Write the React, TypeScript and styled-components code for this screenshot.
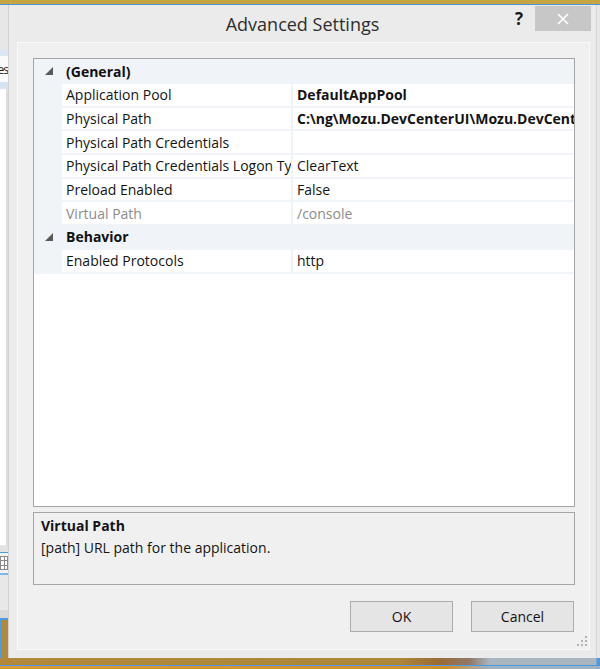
import React from "react";
import styled, { createGlobalStyle } from "styled-components";

const ui = `"Open Sans", "Noto Sans", "DejaVu Sans", sans-serif`;

const GlobalStyle = createGlobalStyle`
  html, body {
    margin: 0;
    padding: 0;
  }
  body {
    width: 600px;
    height: 669px;
    overflow: hidden;
    font-family: ${ui};
    background: #e8e8e8;
  }
  * { box-sizing: border-box; }
`;

const Desktop = styled.div`
  width: 600px;
  height: 669px;
  display: flex;
  flex-direction: column;
  background: #e8e8e8;
`;

const TopEdge = styled.div`
  flex-shrink: 0;
  height: 5px;
  background: #c6a443;
  border-bottom: 1px solid #4a93d6;
`;

const Middle = styled.div`
  display: flex;
  height: 653px;
`;

const BackWindow = styled.div`
  width: 8px;
  display: flex;
  flex-direction: column;
  overflow: hidden;
`;

const BackBand = styled.div<{ $h: number; $bg: string }>`
  flex-shrink: 0;
  height: ${(p) => p.$h}px;
  background: ${(p) => p.$bg};
`;

const BackText = styled.div`
  height: 26px;
  display: flex;
  align-items: center;
  justify-content: flex-end;
  background: #fafafa;
  font-size: 12px;
  color: #222;
  letter-spacing: -1px;
  white-space: nowrap;
`;

const BackList = styled.div`
  flex: 1;
  background: #fff;
  border-right: 2px solid #dcdcdc;
`;

const BackIcon = styled.div`
  height: 20px;
  background: #f2f2f2;
  display: flex;
  align-items: center;
`;

const BackDesk = styled.div`
  height: 38px;
  background: #b08a3a;
  border-left: 2px solid #4a9be0;
`;

const Dialog = styled.div`
  flex: 1;
  margin-right: 3px;
  display: flex;
  flex-direction: column;
  background: #ebebeb;
  border-left: 1px solid #cfcfcf;
  border-right: 1px solid #d6d6d6;
`;

const TitleBar = styled.div`
  height: 37px;
  flex-shrink: 0;
  display: grid;
  grid-template-columns: 1fr auto 1fr;
`;

const Title = styled.div`
  grid-column: 2;
  padding-top: 4px;
  font-size: 18px;
  color: #2e2e2e;
  line-height: 30px;
`;

const TitleButtons = styled.div`
  grid-column: 3;
  justify-self: end;
  display: flex;
  align-items: flex-start;
  gap: 12px;
  padding-right: 5px;
`;

const Help = styled.div`
  margin-top: 3px;
  font-size: 17px;
  font-weight: 700;
  color: #1a1a1a;
  line-height: 22px;
`;

const Close = styled.div`
  margin-top: 1px;
  width: 56px;
  height: 25px;
  background: #c7c7c7;
  display: flex;
  align-items: center;
  justify-content: center;
`;

const Client = styled.div`
  position: relative;
  margin: 0 6px 8px 8px;
  height: 608px;
  display: flex;
  flex-direction: column;
  padding: 15px 14px 17px 15px;
  background: #f0f0f0;
  border: 1px solid #f9f9f9;
`;

const PropGrid = styled.div`
  height: 449px;
  flex-shrink: 0;
  background: #fff;
  border: 1px solid #a5a5a5;
  overflow: hidden;
`;

const RowList = styled.div`
  display: flex;
  flex-direction: column;
  gap: 2px;
  padding: 1px 0 2px;
  background: #f0f3f8;
`;

const CategoryRow = styled.div`
  height: 22px;
  display: grid;
  grid-template-columns: 28px 1fr;
  align-items: center;
  background: #f0f3f8;
  font-size: 14px;
  font-weight: 700;
  color: #111;
`;

const Expander = styled.svg`
  margin-left: 11px;
`;

const CategoryName = styled.div`
  padding-left: 4px;
`;

const PropRow = styled.div`
  height: 21.67px;
  display: grid;
  grid-template-columns: 28px 231px 1fr;
  font-size: 14px;
`;

const Gutter = styled.div`
  background: #f0f3f8;
`;

const Cell = styled.div<{ $bold?: boolean; $muted?: boolean; $divider?: boolean }>`
  display: flex;
  align-items: center;
  padding-left: 4px;
  background: #fff;
  white-space: nowrap;
  overflow: hidden;
  font-weight: ${(p) => (p.$bold ? 700 : 400)};
  color: ${(p) => (p.$muted ? "#8c8c8c" : "#141414")};
  border-right: ${(p) => (p.$divider ? "2px solid #f0f3f8" : "none")};
`;

const Description = styled.div`
  margin-top: 5px;
  height: 73px;
  flex-shrink: 0;
  border: 1px solid #a5a5a5;
  padding: 2px 7px;
  font-size: 14px;
  line-height: 22px;
  color: #141414;
`;

const DescTitle = styled.div`
  font-weight: 700;
`;

const ButtonRow = styled.div`
  margin-top: 16px;
  display: flex;
  justify-content: flex-end;
  gap: 18px;
  padding-right: 1px;
`;

const Button = styled.div`
  width: 103px;
  height: 31px;
  display: flex;
  align-items: center;
  justify-content: center;
  background: #e5e5e5;
  border: 1px solid #acacac;
  font-size: 14px;
  color: #141414;
`;

const Grip = styled.svg`
  position: absolute;
  right: 2px;
  bottom: 3px;
`;

const BottomEdge = styled.div`
  height: 11px;
  flex-shrink: 0;
  display: flex;
  flex-direction: column;
`;

const BottomDesk = styled.div`
  height: 7px;
  background: linear-gradient(
    to right,
    #b2893a 0px,
    #ad8638 400px,
    #9b6a35 440px,
    #8f7a6a 470px,
    #a9b6c1 490px,
    #a9b6c1 596px,
    #4a9be0 597px
  );
`;

const BottomLine = styled.div`
  height: 1px;
  background: #4a9be0;
`;

const BottomTask = styled.div`
  height: 3px;
  background: linear-gradient(to right, #d79a35, #cf8f30 450px, #9fb2c4 490px);
`;

type Item =
  | { kind: "cat"; name: string }
  | { kind: "prop"; name: string; value: string; bold?: boolean; muted?: boolean };

const items: Item[] = [
  { kind: "cat", name: "(General)" },
  { kind: "prop", name: "Application Pool", value: "DefaultAppPool", bold: true },
  { kind: "prop", name: "Physical Path", value: "C:\\ng\\Mozu.DevCenterUI\\Mozu.DevCenterUI", bold: true },
  { kind: "prop", name: "Physical Path Credentials", value: "" },
  { kind: "prop", name: "Physical Path Credentials Logon Type", value: "ClearText" },
  { kind: "prop", name: "Preload Enabled", value: "False" },
  { kind: "prop", name: "Virtual Path", value: "/console", muted: true },
  { kind: "cat", name: "Behavior" },
  { kind: "prop", name: "Enabled Protocols", value: "http" },
];

const Triangle = () => (
  <Expander width="8" height="8" viewBox="0 0 8 8">
    <polygon points="8,0 8,8 0,8" fill="#5a5a5a" />
  </Expander>
);

export default function App() {
  return (
    <>
      <GlobalStyle />
      <Desktop>
        <TopEdge />
        <Middle>
          <BackWindow>
            <BackBand $h={45} $bg="#e7e7e7" />
            <BackBand $h={6} $bg="#dbe6f2" />
            <BackText>es</BackText>
            <BackBand $h={7} $bg="#d5e3f3" />
            <BackList />
            <BackBand $h={7} $bg="#e2e2e2" />
            <BackBand $h={1} $bg="#4a9be0" />
            <BackIcon>
              <svg width="8" height="14" viewBox="0 0 8 14">
                <rect x="0.5" y="0.5" width="7" height="13" fill="#fff" stroke="#8a8a8a" />
                <line x1="0" y1="4.5" x2="8" y2="4.5" stroke="#8a8a8a" />
                <line x1="0" y1="9.5" x2="8" y2="9.5" stroke="#8a8a8a" />
                <line x1="4.5" y1="0" x2="4.5" y2="14" stroke="#8a8a8a" />
              </svg>
            </BackIcon>
            <BackBand $h={2} $bg="#7db6ea" />
            <BackBand $h={35} $bg="#e8e8e8" />
            <BackBand $h={8} $bg="#dadada" />
            <BackBand $h={2} $bg="#4a9be0" />
            <BackDesk />
          </BackWindow>

          <Dialog>
            <TitleBar>
              <Title>Advanced Settings</Title>
              <TitleButtons>
                <Help>?</Help>
                <Close>
                  <svg width="12" height="12" viewBox="0 0 12 12">
                    <path d="M1 1 L11 11 M11 1 L1 11" stroke="#fff" strokeWidth="1.6" />
                  </svg>
                </Close>
              </TitleButtons>
            </TitleBar>

            <Client>
              <PropGrid>
                <RowList>
                  {items.map((it) =>
                    it.kind === "cat" ? (
                      <CategoryRow key={it.name}>
                        <Triangle />
                        <CategoryName>{it.name}</CategoryName>
                      </CategoryRow>
                    ) : (
                      <PropRow key={it.name}>
                        <Gutter />
                        <Cell $divider $muted={it.muted}>
                          {it.name}
                        </Cell>
                        <Cell $bold={it.bold} $muted={it.muted}>
                          {it.value}
                        </Cell>
                      </PropRow>
                    )
                  )}
                </RowList>
              </PropGrid>

              <Description>
                <DescTitle>Virtual Path</DescTitle>
                <div>[path] URL path for the application.</div>
              </Description>

              <ButtonRow>
                <Button>OK</Button>
                <Button>Cancel</Button>
              </ButtonRow>

              <Grip width="10" height="10" viewBox="0 0 10 10">
                <g fill="#b4b4b4">
                  <rect x="8" y="0" width="2" height="2" />
                  <rect x="4" y="4" width="2" height="2" />
                  <rect x="8" y="4" width="2" height="2" />
                  <rect x="0" y="8" width="2" height="2" />
                  <rect x="4" y="8" width="2" height="2" />
                  <rect x="8" y="8" width="2" height="2" />
                </g>
              </Grip>
            </Client>
          </Dialog>
        </Middle>
        <BottomEdge>
          <BottomDesk />
          <BottomLine />
          <BottomTask />
        </BottomEdge>
      </Desktop>
    </>
  );
}
